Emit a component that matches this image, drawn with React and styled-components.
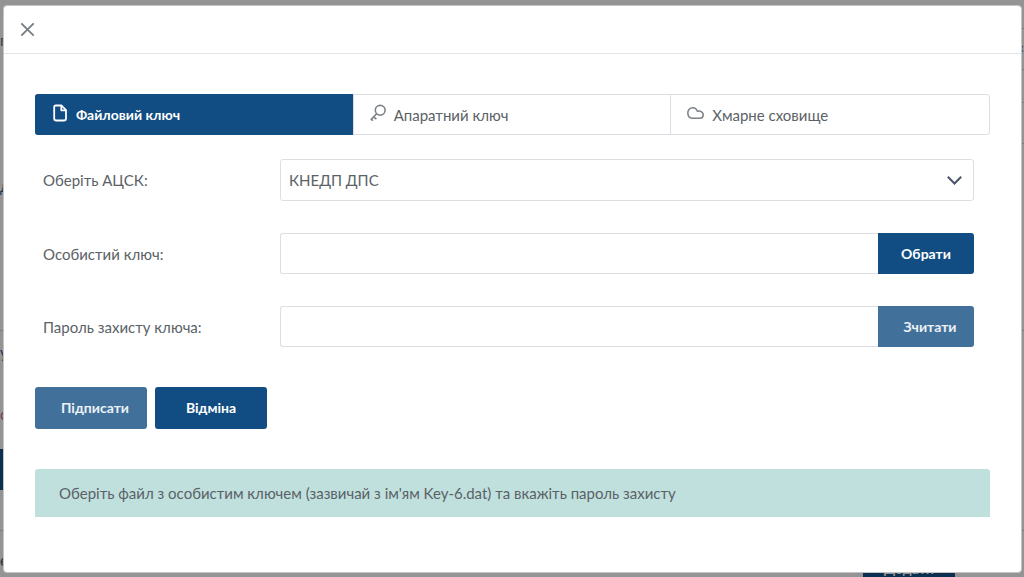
import React from 'react';
import styled, { createGlobalStyle } from 'styled-components';

const navy = '#114d82';
const line = '#dcdee3';
const ink = '#5b6266';

const GlobalStyle = createGlobalStyle`
  * { box-sizing: border-box; }
  body {
    margin: 0;
    color: ${ink};
    background: #949494;
    font: 400 15px/24px Lato, "Noto Sans", sans-serif;
  }
  button, input, select { font: inherit; color: inherit; margin: 0; }
`;

const Screen = styled.div`
  position: relative;
  min-height: 100vh;
  overflow: hidden;
`;

const Page = styled.div`
  position: absolute;
  inset: 0;
  overflow: hidden;
  color: #3a3e42;
`;

const PageRow = styled.div`
  display: flex;
  justify-content: space-between;
  align-items: flex-start;
  height: ${(p) => p.$h}px;
  padding-top: ${(p) => p.$top || 0}px;
  border-bottom: ${(p) => (p.$line ? '1px solid #7c7d7f' : '0')};
  color: ${(p) => p.$color || 'inherit'};
  font-weight: ${(p) => (p.$bold ? 700 : 400)};
`;

const PageFields = styled.div`
  display: grid;
  gap: 32px;
`;

const PageField = styled.div`
  width: 12px;
  height: 42px;
  border: solid #7c7d7f;
  border-width: 1px 0;
  color: #1c3754;
  line-height: 36px;
  text-align: right;
`;

const PageButton = styled.button`
  width: ${(p) => p.$w}px;
  height: 41px;
  padding: 0;
  border: 0;
  background: #0b2f50;
  color: #949494;
  font-size: 14px;
  font-weight: 700;
  margin-right: ${(p) => p.$right || 0}px;
  margin-left: ${(p) => (p.$right ? 'auto' : 0)};
`;

const Modal = styled.section`
  position: relative;
  margin: 5px 2px 5px 3px;
  border: 1px solid #c4c4c4;
  border-radius: 4px;
  background: #fff;
`;

const ModalHeader = styled.header`
  display: flex;
  align-items: center;
  height: 48px;
  padding: 0 16px;
  border-bottom: 1px solid #e3e4e5;
`;

const CloseButton = styled.button`
  display: flex;
  padding: 0;
  border: 0;
  background: none;
  color: #767d82;
`;

const ModalBody = styled.div`
  padding: 40px 31px 55px;
`;

const Tabs = styled.div`
  display: grid;
  grid-template-columns: repeat(3, 1fr);
  height: 41px;
  border: 1px solid ${line};
  border-radius: 3px;
`;

const Tab = styled.button`
  display: flex;
  align-items: center;
  gap: 8px;
  margin: -1px 0 -1px -1px;
  padding: 0 16px;
  border: 0;
  border-left: 1px solid ${(p) => (p.$active ? navy : line)};
  border-radius: ${(p) => (p.$active ? '3px 0 0 3px' : '0')};
  background: ${(p) => (p.$active ? navy : 'transparent')};
  color: ${(p) => (p.$active ? '#fff' : 'inherit')};
  font-size: ${(p) => (p.$active ? 14 : 15)}px;
  font-weight: ${(p) => (p.$active ? 700 : 400)};
  svg { flex: none; margin-bottom: 4px; color: ${(p) => (p.$active ? '#fff' : '#7b8288')}; }
`;

const Form = styled.form`
  padding-top: 24px;
`;

const Fields = styled.div`
  display: grid;
  gap: 32px;
  padding: 0 16px 0 8px;
`;

const Field = styled.div`
  display: grid;
  grid-template-columns: minmax(160px, 237px) 1fr;
  align-items: center;
`;

const Group = styled.div`
  position: relative;
  display: flex;
`;

const Select = styled.select`
  appearance: none;
  width: 100%;
  height: 42px;
  padding: 0 40px 0 8px;
  border: 1px solid ${line};
  border-radius: 3px;
  background: #fff;
`;

const Chevron = styled.svg`
  position: absolute;
  right: 12px;
  top: 17px;
  pointer-events: none;
`;

const Input = styled.input`
  flex: 1;
  min-width: 0;
  height: 41px;
  padding: 0 8px;
  border: 1px solid ${line};
  border-right: 0;
  border-radius: 3px 0 0 3px;
  background: #fff;
`;

const Button = styled.button`
  width: ${(p) => (p.$attached ? 96 : 112)}px;
  height: ${(p) => (p.$attached ? 41 : 42)}px;
  padding: 0 0 0 ${(p) => (p.disabled ? 8 : 0)}px;
  border: 0;
  border-radius: ${(p) => (p.$attached ? '0 3px 3px 0' : '3px')};
  background: ${(p) => (p.disabled ? '#41719b' : navy)};
  color: ${(p) => (p.disabled ? '#ecf1f5' : '#fff')};
  font-size: 14px;
  font-weight: 700;
`;

const Actions = styled.div`
  display: flex;
  gap: 8px;
  padding: 40px 0;
`;

const Notice = styled.p`
  margin: 0;
  padding: 12px 24px;
  border-radius: 3px 3px 0 0;
  background: #c0e0de;
`;

const FileIcon = () => (
  <svg width="16" height="18" viewBox="0 0 16 18" fill="none" stroke="currentColor" strokeWidth="1.8" strokeLinejoin="round">
    <path d="M3.7 1.5H9.5L14 6.2V14.5Q14 16.5 12 16.5H4.2Q2.2 16.5 2.2 14.5V3Q2.2 1.5 3.7 1.5Z" />
    <path d="M9.3 1.8V6.3H13.8" />
  </svg>
);

const KeyIcon = () => (
  <svg width="16" height="18" viewBox="0 0 16 18" fill="none" stroke="currentColor" strokeWidth="1.6">
    <circle cx="10.2" cy="6.3" r="4.9" />
    <path d="M6.6 9.8L.8 15.9M3.6 12.9L6.4 15.2M1.3 15.3L3 16.6" />
  </svg>
);

const CloudIcon = () => (
  <svg width="17" height="18" viewBox="0 0 17 18" fill="none" stroke="currentColor" strokeWidth="1.6">
    <path d="M5 14.2C2.5 14.2.8 12.1.8 9.1C.8 5.8 2.9 3.8 5.7 3.8C8.1 3.8 9.6 5.1 10.4 7.2C13.7 6.5 16.2 8.3 16.2 10.8C16.2 13 14.8 14.2 12.7 14.2Z" />
  </svg>
);

export default function App() {
  return (
    <Screen>
      <GlobalStyle />
      <Page aria-hidden="true">
        <PageRow $h={174} $top={28}>
          <span>г</span>
          <PageFields>
            <PageField>«</PageField>
            <PageField />
          </PageFields>
        </PageRow>
        <PageRow $h={157} $line $color="#1c3754"><span>д</span></PageRow>
        <PageRow $h={71} $top={9} $color="#1c3754"><span>у</span></PageRow>
        <PageRow $h={47} $color="#70404a"><span>с</span></PageRow>
        <PageRow $h={82} $line><PageButton $w={4} tabIndex={-1} /></PageRow>
        <PageRow $h={46} $top={17} $bold>
          <span>е</span>
          <PageButton $w={92} $right={69} tabIndex={-1}>Додати</PageButton>
        </PageRow>
      </Page>
      <Modal role="dialog" aria-label="Підписати">
        <ModalHeader>
          <CloseButton type="button" aria-label="Закрити">
            <svg width="15" height="15" viewBox="0 0 15 15" fill="none" stroke="currentColor" strokeWidth="1.8">
              <path d="M1.3 1.3L13.7 13.7M13.7 1.3L1.3 13.7" />
            </svg>
          </CloseButton>
        </ModalHeader>
        <ModalBody>
          <Tabs role="tablist">
            <Tab type="button" role="tab" aria-selected="true" $active><FileIcon />Файловий ключ</Tab>
            <Tab type="button" role="tab" aria-selected="false"><KeyIcon />Апаратний ключ</Tab>
            <Tab type="button" role="tab" aria-selected="false"><CloudIcon />Хмарне сховище</Tab>
          </Tabs>
          <Form onSubmit={(e) => e.preventDefault()}>
            <Fields>
              <Field>
                <label htmlFor="ca">Оберіть АЦСК:</label>
                <Group>
                  <Select id="ca"><option>КНЕДП ДПС</option></Select>
                  <Chevron width="15" height="9" viewBox="0 0 15 9" fill="none" stroke="#4a5568" strokeWidth="2">
                    <path d="M.8 .8L7.5 7.5L14.2 .8" />
                  </Chevron>
                </Group>
              </Field>
              <Field>
                <label htmlFor="key">Особистий ключ:</label>
                <Group>
                  <Input id="key" type="text" />
                  <Button type="button" $attached>Обрати</Button>
                </Group>
              </Field>
              <Field>
                <label htmlFor="password">Пароль захисту ключа:</label>
                <Group>
                  <Input id="password" type="password" />
                  <Button type="button" $attached disabled>Зчитати</Button>
                </Group>
              </Field>
            </Fields>
            <Actions>
              <Button type="submit" disabled>Підписати</Button>
              <Button type="button">Відміна</Button>
            </Actions>
          </Form>
          <Notice>Оберіть файл з особистим ключем (зазвичай з ім'ям Key-6.dat) та вкажіть пароль захисту</Notice>
        </ModalBody>
      </Modal>
    </Screen>
  );
}
